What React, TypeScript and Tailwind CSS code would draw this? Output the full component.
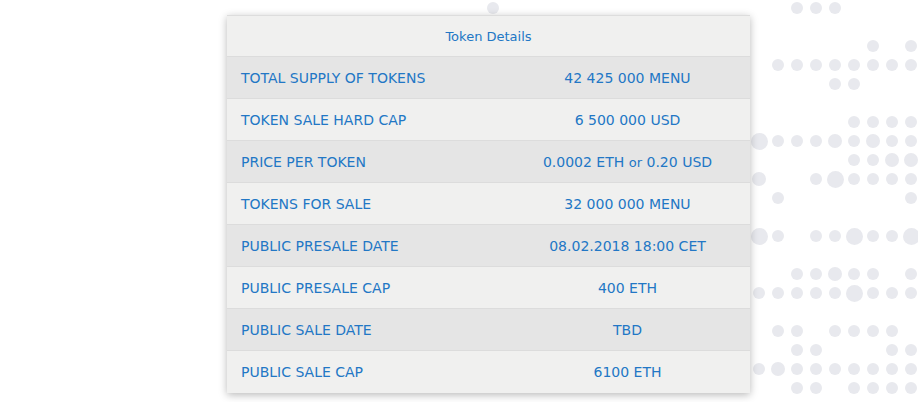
import React from "react";

const rows: [string, React.ReactNode][] = [
  ["TOTAL SUPPLY OF TOKENS", "42 425 000 MENU"],
  ["TOKEN SALE HARD CAP", "6 500 000 USD"],
  ["PRICE PER TOKEN", <>0.0002 ETH <span className="text-[13px]">or</span> 0.20 USD</>],
  ["TOKENS FOR SALE", "32 000 000 MENU"],
  ["PUBLIC PRESALE DATE", "08.02.2018 18:00 CET"],
  ["PUBLIC PRESALE CAP", "400 ETH"],
  ["PUBLIC SALE DATE", "TBD"],
  ["PUBLIC SALE CAP", "6100 ETH"],
];

// dot pattern, one string per grid row (19px pitch), 9 columns
// . = empty, o = small, m = medium, L = large
const pattern = [
  "..ooo....",
  ".........",
  "......o.o",
  ".oooooooo",
  "....oo...",
  ".........",
  ".....oooo",
  "Looomomoo",
  ".....oomm",
  "m..oLoooo",
  ".o......o",
  ".........",
  "Lo.ooLooL",
  ".........",
  "..oomoo.o",
  "oooooLooo",
  ".........",
  ".oo.oooo.",
  "..oo...oo",
  "omooooooo",
  "..oo.oooo",
];

const dotSize: Record<string, string> = {
  o: "w-[12px] h-[12px]",
  m: "w-[14px] h-[14px]",
  L: "w-[17px] h-[17px]",
};

function Dots() {
  return (
    <div className="absolute left-[749.5px] top-[-1.5px] grid grid-cols-[repeat(9,19px)] auto-rows-[19px]">
      {pattern.flatMap((line, r) =>
        line.split("").map((c, i) => (
          <div key={`${r}-${i}`} className="flex items-center justify-center">
            {c !== "." && <span className={`rounded-full bg-[#e8e9ee] ${dotSize[c]}`} />}
          </div>
        ))
      )}
    </div>
  );
}

export default function App() {
  return (
    <div
      className="relative w-[918px] h-[402px] overflow-hidden bg-white"
      style={{ fontFamily: '"DejaVu Sans", sans-serif' }}
    >
      <Dots />
      <span className="absolute left-[487px] top-[2px] w-[12px] h-[12px] rounded-full bg-[#e8e9ee]" />
      <div className="relative ml-[227px] mt-[15px] w-[523px] bg-[#f0f0ef] border-t border-[#dddddd] shadow-[0_2px_8px_rgba(0,0,0,0.28)] text-[#2277c5]">
        <div className="h-[41px] pt-[1px] flex items-center justify-center text-[13px] border-b border-[#dcdcdc]">
          Token Details
        </div>
        {rows.map(([label, value], i) => (
          <div
            key={label}
            className={`flex h-[42px] pt-[1px] items-center text-[14px] ${i < rows.length - 1 ? "border-b border-[#dcdcdc]" : ""} ${i % 2 === 0 ? "bg-[#e5e5e5]" : "bg-[#f0f0ef]"}`}
          >
            <div className="w-[278px] pl-[14px]">{label}</div>
            <div className="flex-1 text-center">{value}</div>
          </div>
        ))}
      </div>
    </div>
  );
}
